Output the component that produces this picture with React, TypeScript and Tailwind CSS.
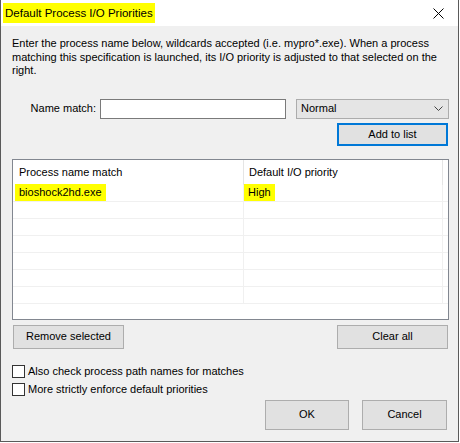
import React from "react";

const font = { fontFamily: '"Liberation Sans", Arial, sans-serif' };

function Btn({ children, w, h, focus }: { children: React.ReactNode; w: string; h: string; focus?: boolean }) {
  return (
    <div
      className={`${w} ${h} flex items-center justify-center bg-[#e1e1e1] text-[11px] text-black ${
        focus ? "border-2 border-[#0078d7]" : "border border-[#adadad]"
      }`}
    >
      {children}
    </div>
  );
}

function Check({ label }: { label: string }) {
  return (
    <div className="flex items-center h-[13px]">
      <div className="w-[13px] h-[13px] bg-white border border-[#333333]" />
      <span className="ml-[3px] text-[11px] leading-[13px] text-black">{label}</span>
    </div>
  );
}

export default function App() {
  const rows = [0, 1, 2, 3, 4, 5, 6];
  return (
    <div className="w-[460px] h-[443px] bg-white" style={font}>
      <div className="w-[459px] h-[442px] flex flex-col border-l border-r border-b border-[#5a5a5a]">
        {/* Title bar */}
        <div className="h-[26px] bg-white flex items-center justify-between pl-[2px] pr-[14px]">
          <span className="bg-[#ffff00] text-[11.5px] leading-[20px] px-[2px] text-black">Default Process I/O Priorities</span>
          <svg width="11" height="11" viewBox="0 0 11 11">
            <path d="M0.5 0.5 L10.5 10.5 M10.5 0.5 L0.5 10.5" stroke="#000" strokeWidth="1" />
          </svg>
        </div>
        {/* Body */}
        <div className="flex-1 bg-[#f0f0f0] flex flex-col pl-[11px] pr-[9px] pt-[11px]">
          <p className="text-[11px] leading-[13.5px] text-black">
            Enter the process name below, wildcards accepted (i.e. mypro*.exe). When a process matching this specification is launched, its I/O priority is adjusted to that selected on the right.
          </p>
          <div className="flex items-center mt-[21px] h-[20px]">
            <span className="w-[84px] text-right text-[11px] text-black">Name match:</span>
            <div className="ml-[4px] w-[186px] h-[20px] bg-white border border-[#7a7a7a]" />
            <div className="ml-[10px] w-[153px] h-[20px] bg-[#e5e5e5] border border-[#acacac] flex items-center justify-between pl-[4px] pr-[5px]">
              <span className="text-[11px] text-black">Normal</span>
              <svg width="9" height="5" viewBox="0 0 9 5">
                <path d="M0.5 0.5 L4.5 4.5 L8.5 0.5" stroke="#444" strokeWidth="1" fill="none" />
              </svg>
            </div>
          </div>
          <div className="flex justify-end mt-[4px] pr-[1px]">
            <Btn w="w-[111px]" h="h-[23px]" focus>
              Add to list
            </Btn>
          </div>
          {/* List */}
          <div className="mt-[13px] w-[437px] h-[161px] bg-white border border-[#828790] flex flex-col overflow-hidden">
            <div className="h-[25px] flex shrink-0">
              <div className="w-[231px] flex items-center pl-[6px] text-[11px] text-black border-r border-[#e5e5e5]">
                Process name match
              </div>
              <div className="w-[199px] flex items-center pl-[5px] text-[11px] text-black border-r border-[#e5e5e5]">
                Default I/O priority
              </div>
            </div>
            {rows.map((i) => (
              <div key={i} className="h-[17px] flex shrink-0 border-b border-[#f0f0f0]">
                <div className="w-[231px] flex items-center pl-[2px] border-r border-[#f0f0f0] text-[11px] text-black">
                  {i === 0 && <span className="bg-[#ffff00] px-[4px] leading-[17px]">bioshock2hd.exe</span>}
                </div>
                <div className="w-[199px] flex items-center border-r border-[#f0f0f0] text-[11px] text-black">
                  {i === 0 && <span className="bg-[#ffff00] px-[4px] leading-[17px]">High</span>}
                </div>
              </div>
            ))}
          </div>
          <div className="flex justify-between mt-[5px] pl-[1px] pr-[1px]">
            <Btn w="w-[111px]" h="h-[24px]">Remove selected</Btn>
            <Btn w="w-[111px]" h="h-[24px]">Clear all</Btn>
          </div>
          <div className="mt-[16px] flex flex-col gap-[5px]">
            <Check label="Also check process path names for matches" />
            <Check label="More strictly enforce default priorities" />
          </div>
          <div className="flex justify-end gap-[13px] mt-[4px] pr-[2px]">
            <Btn w="w-[84px]" h="h-[30px]">OK</Btn>
            <Btn w="w-[85px]" h="h-[30px]">Cancel</Btn>
          </div>
        </div>
      </div>
    </div>
  );
}
